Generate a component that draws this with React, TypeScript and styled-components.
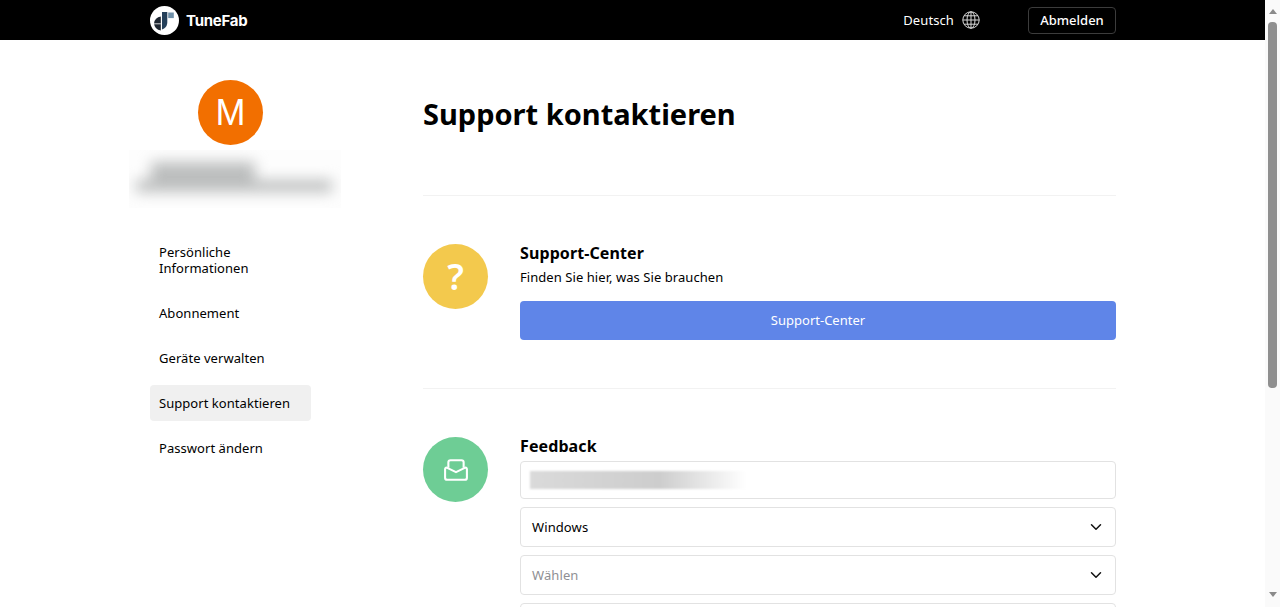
import React from 'react';
import styled, { createGlobalStyle } from 'styled-components';
import { ChevronDown } from 'lucide-react';

const NAV_ITEMS = [
  'Persönliche Informationen',
  'Abonnement',
  'Geräte verwalten',
  'Support kontaktieren',
  'Passwort ändern',
];

const Logo = () => (
  <svg width="29" height="29" viewBox="0 0 29 29">
    <circle cx="14.5" cy="14.5" r="14.5" fill="#fff" />
    <path d="M4 17.5 A8 8 0 0 1 10.8 10.6 V24.5 A8 8 0 0 1 4 17.5 Z" fill="#1d2530" />
    <path d="M4 17.8 H10.8" stroke="#fff" strokeWidth="0.8" />
    <path d="M12 6 H17.3 V16 C17.3 20 15 22.8 12 23.4 Z" fill="#25405a" />
    <rect x="18.2" y="6.5" width="5.6" height="5.6" fill="#6f8fa8" />
  </svg>
);

const GlobeIcon = () => (
  <svg width="18" height="18" viewBox="0 0 18 18" fill="none" stroke="#d8d8d8" strokeWidth="1">
    <circle cx="9" cy="9" r="8.2" />
    <ellipse cx="9" cy="9" rx="4" ry="8.2" />
    <path d="M9 .8 V17.2 M.8 9 H17.2 M2 4.8 H16 M2 13.2 H16" />
  </svg>
);

const InboxIcon = () => (
  <svg width="24" height="22" viewBox="1 1 22 20" fill="none" stroke="#fff" strokeWidth="1.9" strokeLinejoin="round">
    <path d="M5 9 V4 A2 2 0 0 1 7 2 H17 A2 2 0 0 1 19 4 V9" />
    <path d="M2 10 A1.5 1.5 0 0 1 3.5 8.8 L12 13 L20.5 8.8 A1.5 1.5 0 0 1 22 10 V18 A2 2 0 0 1 20 20 H4 A2 2 0 0 1 2 18 Z" />
  </svg>
);

export default function App() {
  return (
    <>
      <GlobalStyle />
      <Window>
        <Viewport>
          <Header>
            <HeaderInner>
              <Brand>
                <Logo />
                <BrandName>TuneFab</BrandName>
              </Brand>
              <Language>
                Deutsch
                <GlobeIcon />
              </Language>
              <LogoutButton>Abmelden</LogoutButton>
            </HeaderInner>
          </Header>
          <Body>
            <Sidebar>
              <Avatar>M</Avatar>
              <AccountPatch>
                <BlurredAccount>
                  <BlurLine $width={104} $height={18} $left={22} />
                  <BlurLine $width={196} $height={12} $left={7} />
                </BlurredAccount>
              </AccountPatch>
              <Nav>
                {NAV_ITEMS.map(item => (
                  <NavItem key={item} $active={item === 'Support kontaktieren'}>
                    {item}
                  </NavItem>
                ))}
              </Nav>
            </Sidebar>
            <Main>
              <PageTitle>Support kontaktieren</PageTitle>
              <Section>
                <IconCircle $color="#f3c94d">
                  <QuestionMark>?</QuestionMark>
                </IconCircle>
                <SectionBody>
                  <SectionTitle>Support-Center</SectionTitle>
                  <SectionText>Finden Sie hier, was Sie brauchen</SectionText>
                  <PrimaryButton>Support-Center</PrimaryButton>
                </SectionBody>
              </Section>
              <Section>
                <IconCircle $color="#6ecd95">
                  <InboxIcon />
                </IconCircle>
                <SectionBody>
                  <SectionTitle>Feedback</SectionTitle>
                  <EmailField>
                    <BlurredEmail />
                  </EmailField>
                  <SelectField>
                    Windows
                    <ChevronDown size={18} strokeWidth={2} color="#111" />
                  </SelectField>
                  <SelectField $placeholder>
                    Wählen
                    <ChevronDown size={18} strokeWidth={2} color="#111" />
                  </SelectField>
                  <SelectField />
                </SectionBody>
              </Section>
            </Main>
          </Body>
        </Viewport>
        <Scrollbar>
          <ArrowUp />
          <Track>
            <Thumb />
          </Track>
          <ArrowDown />
        </Scrollbar>
      </Window>
    </>
  );
}

const GlobalStyle = createGlobalStyle`
  html, body {
    margin: 0;
    height: 100%;
    overflow: hidden;
    background: #fff;
  }
  body {
    color: #000;
    font-family: "Noto Sans", "Open Sans", sans-serif;
  }
  * {
    box-sizing: border-box;
  }
`;

const Window = styled.div`
  display: flex;
  height: 607px;
  width: 1280px;
`;

const Viewport = styled.div`
  flex: 1;
  height: 607px;
  min-width: 0;
  overflow: hidden;
`;

const Header = styled.header`
  background: #000;
  display: flex;
  height: 40px;
  padding-left: 150px;
`;

const HeaderInner = styled.div`
  align-items: center;
  color: #fff;
  display: flex;
  width: 966px;
`;

const Brand = styled.div`
  align-items: center;
  display: flex;
  gap: 7px;
  margin-right: auto;
`;

const BrandName = styled.span`
  font-family: "Inter", sans-serif;
  font-size: 15px;
  font-weight: 700;
  letter-spacing: -0.25px;
`;

const Language = styled.div`
  align-items: center;
  display: flex;
  font-size: 13px;
  gap: 8px;
  letter-spacing: 0.1px;
  margin-right: 48px;
`;

const LogoutButton = styled.button`
  background: #000;
  border: 1px solid #3c3c3c;
  border-radius: 4px;
  color: #fff;
  font-family: inherit;
  font-size: 13px;
  font-weight: 500;
  height: 27px;
  padding: 0;
  width: 88px;
`;

const Body = styled.div`
  display: flex;
  margin-left: 150px;
  width: 966px;
`;

const Sidebar = styled.aside`
  align-items: center;
  display: flex;
  flex-direction: column;
  flex-shrink: 0;
  padding-top: 40px;
  width: 161px;
`;

const Avatar = styled.div`
  align-items: center;
  background: #f26f00;
  border-radius: 50%;
  color: #fff;
  display: flex;
  flex-shrink: 0;
  font-family: "Liberation Sans", sans-serif;
  font-size: 36px;
  height: 65px;
  justify-content: center;
  width: 65px;
`;

const AccountPatch = styled.div`
  background: #fdfdfd;
  flex-shrink: 0;
  height: 58px;
  margin: 5px 0 0 8px;
  overflow: hidden;
  width: 212px;
`;

const BlurredAccount = styled.div`
  display: flex;
  filter: blur(7px);
  flex-direction: column;
  padding-top: 12px;
`;

const BlurLine = styled.div<{ $width: number; $height: number; $left: number }>`
  background: #bcbebe;
  height: ${p => p.$height}px;
  margin-left: ${p => p.$left}px;
  width: ${p => p.$width}px;
`;

const Nav = styled.nav`
  align-self: stretch;
  display: flex;
  flex-direction: column;
  gap: 9px;
  margin-top: 26px;
`;

const NavItem = styled.a<{ $active?: boolean }>`
  background: ${p => (p.$active ? '#f0f0f0' : 'transparent')};
  border-radius: 4px;
  color: #000;
  font-size: 13px;
  letter-spacing: 0.05px;
  line-height: 16px;
  padding: 10px 9px;
`;

const Main = styled.main`
  flex: 1;
  margin-left: 112px;
  min-width: 0;
  padding-top: 51px;
`;

const PageTitle = styled.h1`
  font-size: 29px;
  font-weight: 700;
  line-height: 46px;
  margin: 0 0 58px;
`;

const Section = styled.section`
  border-top: 1px solid #f2f2f2;
  display: flex;
  gap: 32px;
  padding: 48px 0;
`;

const IconCircle = styled.div<{ $color: string }>`
  align-items: center;
  background: ${p => p.$color};
  border-radius: 50%;
  display: flex;
  flex-shrink: 0;
  height: 65px;
  justify-content: center;
  width: 65px;
`;

const QuestionMark = styled.span`
  color: #fff;
  font-family: "Noto Sans", sans-serif;
  font-size: 36px;
  font-weight: 600;
  line-height: 1;
`;

const SectionBody = styled.div`
  display: flex;
  flex: 1;
  flex-direction: column;
  min-width: 0;
`;

const SectionTitle = styled.h2`
  font-size: 16px;
  font-weight: 700;
  letter-spacing: 0.1px;
  line-height: 18px;
  margin: 0;
`;

const SectionText = styled.p`
  font-size: 13px;
  letter-spacing: 0.06px;
  line-height: 18px;
  margin: 6px 0 15px;
`;

const PrimaryButton = styled.button`
  background: #5f85e8;
  border: none;
  border-radius: 4px;
  color: #fff;
  font-family: inherit;
  font-size: 13px;
  height: 39px;
  padding: 0 0 1px;
`;

const EmailField = styled.div`
  align-items: center;
  border: 1px solid #e2e2e2;
  border-radius: 4px;
  display: flex;
  flex-shrink: 0;
  height: 38px;
  margin-top: 6px;
  padding: 0 9px;
`;

const BlurredEmail = styled.div`
  background: linear-gradient(90deg, #dadada, #cdcdcd 60%, #ffffff);
  filter: blur(1px);
  height: 18px;
  width: 216px;
`;

const SelectField = styled.div<{ $placeholder?: boolean }>`
  align-items: center;
  border: 1px solid #e2e2e2;
  border-radius: 4px;
  color: ${p => (p.$placeholder ? '#8f8f94' : '#000')};
  display: flex;
  flex-shrink: 0;
  font-size: 13px;
  height: 40px;
  justify-content: space-between;
  letter-spacing: 0.1px;
  margin-top: 8px;
  padding: 0 10px 0 11px;
`;

const Scrollbar = styled.div`
  background: #fafafa;
  display: flex;
  flex-direction: column;
  flex-shrink: 0;
  width: 15px;
`;

const ArrowUp = styled.div`
  border-bottom: 5px solid #8a8a8a;
  border-left: 4.5px solid transparent;
  border-right: 4.5px solid transparent;
  height: 0;
  margin: 9px auto 8px;
  width: 0;
`;

const ArrowDown = styled.div`
  border-left: 4.5px solid transparent;
  border-right: 4.5px solid transparent;
  border-top: 5px solid #8a8a8a;
  height: 0;
  margin: 8px auto 10px;
  width: 0;
`;

const Track = styled.div`
  display: flex;
  flex: 1;
  flex-direction: column;
  padding: 0 3px;
`;

const Thumb = styled.div`
  background: #8f8f8f;
  border-radius: 4px;
  height: 366px;
`;
